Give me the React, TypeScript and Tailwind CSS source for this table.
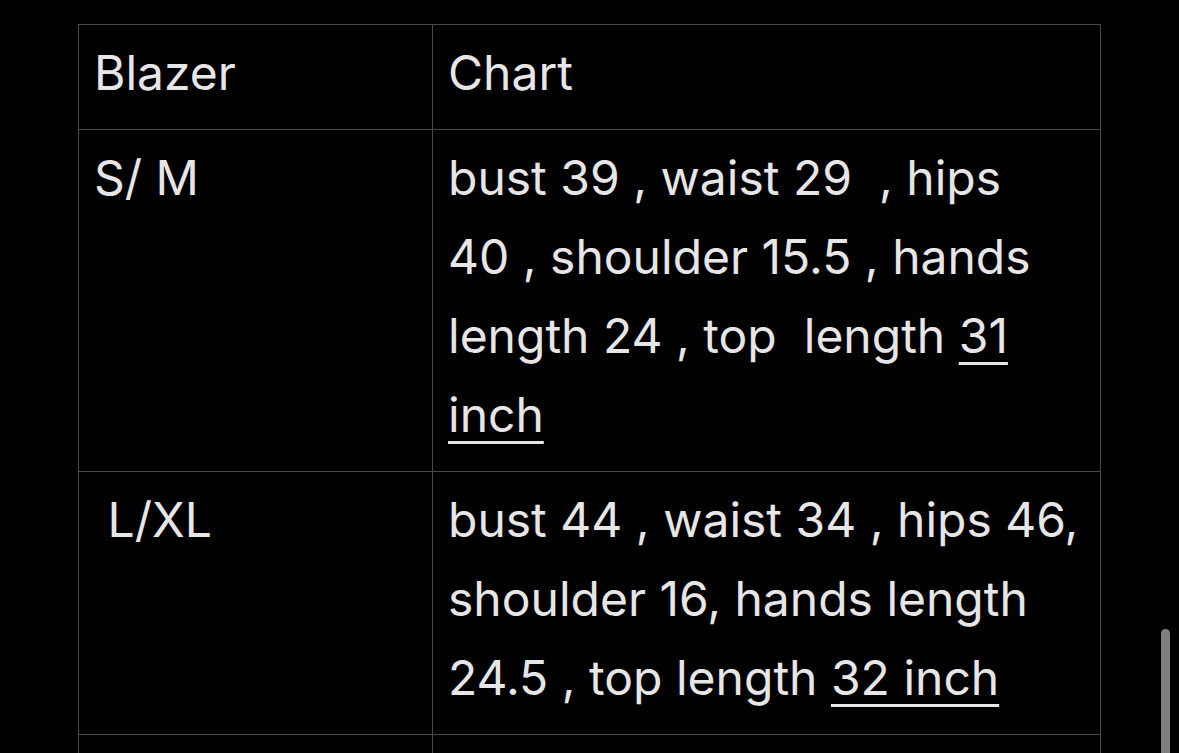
import React from 'react';

const U = ({ children }: { children: React.ReactNode }) => (
  <span className="underline decoration-[3px] underline-offset-[9px]">{children}</span>
);

const rows = [
  { size: 'Blazer', chart: <>Chart</> },
  {
    size: 'S/ M',
    chart: (
      <>
        {'bust 39 , waist 29  , hips'}
        <br />
        {'40 , shoulder 15.5 , hands'}
        <br />
        {'length 24 , top  length '}
        <U>31</U>
        <br />
        <U>inch</U>
      </>
    ),
  },
  {
    size: ' L/XL',
    chart: (
      <>
        {'bust 44 , waist 34 , hips 46,'}
        <br />
        {'shoulder 16, hands length'}
        <br />
        {'24.5 , top length '}
        <U>32 inch</U>
      </>
    ),
  },
  { size: '', chart: <>&nbsp;</> },
];

const App = () => {
  return (
    <div className="relative h-[753px] w-[1179px] overflow-hidden bg-black pl-[78px] pt-[24px] font-['Inter',sans-serif] text-[#e6e6e6]">
      <table className="w-[1023px] table-fixed border-collapse">
        <colgroup>
          <col className="w-[354px]" />
          <col />
        </colgroup>
        <tbody>
          {rows.map((row, i) => (
            <tr key={i}>
              <td className="whitespace-pre border border-[#4a4a4a] pb-[17px] pl-[15px] pr-4 pt-[8px] align-top text-[48px] leading-[79px]">
                {row.size}
              </td>
              <td className="whitespace-pre border border-[#4a4a4a] pb-[17px] pl-[15px] pr-4 pt-[8px] align-top text-[48px] leading-[79px]">
                {row.chart}
              </td>
            </tr>
          ))}
        </tbody>
      </table>

      {/* scroll indicator */}
      <div className="absolute left-[1161px] top-[629px] h-[140px] w-[9px] rounded-full bg-[#808080]" />
    </div>
  );
};

export default App;
